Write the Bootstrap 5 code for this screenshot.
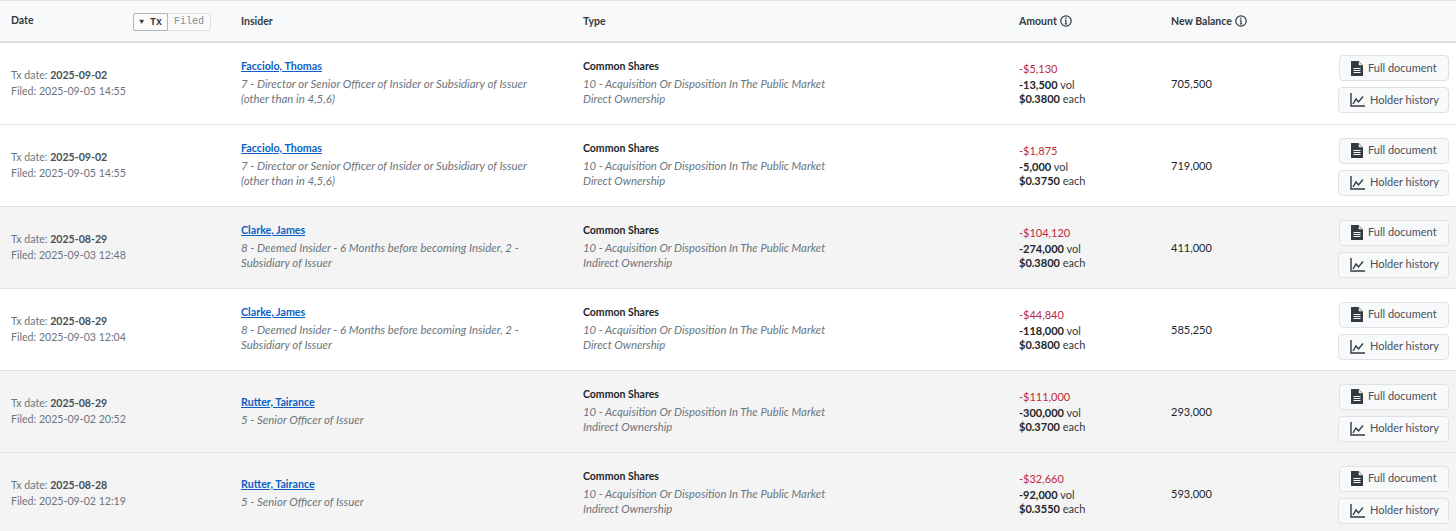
<!DOCTYPE html>
<html lang="en"><head><meta charset="utf-8">
<link href="https://cdn.jsdelivr.net/npm/bootstrap@5.3.0/dist/css/bootstrap.min.css" rel="stylesheet">
<style>
body{font-family:"Lato","Liberation Sans",sans-serif;font-size:11px;color:#343a40;background:#fff;overflow:hidden}
.tx-table{table-layout:fixed;width:1456px;margin:0;border-collapse:collapse;font-size:11px;--bs-table-bg:transparent}
.tx-table th{height:41px;background:#f8f9fa;border-top:1px solid #e3e5e8;border-bottom:2px solid #dcdfe3;font-size:10.5px;font-weight:700;color:#343a40;padding:2px 0 0 11px;vertical-align:middle}
.tx-table td{height:82px;padding:0 0 0 11px;border-bottom:1px solid #dee2e6;vertical-align:middle;line-height:15px}
.tx-table tbody tr:first-child td{height:83px}
.tx-table th.c-ins,.tx-table th.c-typ,.tx-table th.c-amt,.tx-table th.c-bal,.tx-table td.c-amt,.tx-table td.c-bal{padding-left:0}
.tx-table td.c-ins{padding:0 0 3px}
.tx-table td.c-typ{padding:0 0 2px}
.tx-table td.c-date{padding-bottom:1px}
.tx-table td.c-act{padding:2px 7px 0 0;text-align:right}
.tx-table tr.shade td{background:#f4f4f4}
.date-lines{color:#6c757d;line-height:16px;font-size:10.6px}
.date-lines b{color:#495057;font-weight:700}
.who{font-size:10.7px;font-weight:700;color:#0d5fc4;text-decoration:underline;display:block;margin-bottom:3px}
.kind{font-size:10.5px;font-weight:700;color:#212529;display:block;margin-bottom:2px}
.sub{font-style:italic;color:#6c757d}
.c-ins .sub{font-size:11.45px}
.c-typ .sub{font-size:11.3px}
.neg{color:#bd2a3c;display:block;margin-bottom:2px}
.amt-line{color:#343a40;line-height:14px;display:block}
.amt-line b{color:#212529;font-weight:700}
.info{width:12px;height:12px;vertical-align:-2px;margin-left:1px}
.seg{display:inline-flex;font-family:"Liberation Mono",monospace;font-size:10px;line-height:15px;float:right;margin-right:30px}
.seg span{border:1px solid #dee2e6;border-left:0;padding:0 6px;color:#868e96;font-weight:400;border-radius:0 2px 2px 0}
.seg span.on{border:1px solid #adb5bd;background:#fbfbfc;color:#343a40;font-weight:700;border-radius:2px 0 0 2px;padding:0 5px}
.seg i{font-style:normal;font-size:8px;vertical-align:1px}
.acts{display:inline-flex;flex-direction:column;align-items:flex-end;gap:6px;vertical-align:middle}
.acts .btn{--bs-btn-font-size:11px;--bs-btn-color:#495057;--bs-btn-bg:#f8f9fa;--bs-btn-border-color:#dee2e6;--bs-btn-hover-bg:#f8f9fa;--bs-btn-hover-color:#495057;--bs-btn-hover-border-color:#dee2e6;--bs-btn-border-radius:4px;height:26px;padding:0 8px;display:inline-flex;align-items:center;gap:5px;white-space:nowrap}
.acts .btn.w-a{width:110px;padding-left:11px}
.acts .btn.w-b{width:111px;padding-left:11px}
.acts svg{flex:none}
</style></head><body>
<table class="table tx-table">
<colgroup><col style="width:241px"><col style="width:342px"><col style="width:436px"><col style="width:152px"><col style="width:156px"><col></colgroup>
<thead><tr>
<th><span class="seg"><span class="on"><i>▼</i> Tx</span><span>Filed</span></span>Date</th>
<th class="c-ins">Insider</th><th class="c-typ">Type</th>
<th class="c-amt">Amount <svg class="info" viewBox="0 0 12 12" fill="none" stroke="#343a40" stroke-width="1.200"><circle cx="6" cy="6" r="5.200"/><path d="M6 5.200V9M4.800 9h2.400M4.900 5.200H6"/><circle cx="6" cy="3.300" r=".8" fill="#343a40" stroke="none"/></svg></th>
<th class="c-bal">New Balance <svg class="info" viewBox="0 0 12 12" fill="none" stroke="#343a40" stroke-width="1.200"><circle cx="6" cy="6" r="5.200"/><path d="M6 5.200V9M4.800 9h2.400M4.900 5.200H6"/><circle cx="6" cy="3.300" r=".8" fill="#343a40" stroke="none"/></svg></th>
<th></th>
</tr></thead>
<tbody>
<tr>
<td class="c-date"><div class="date-lines">Tx date: <b>2025-09-02</b><br>Filed: 2025-09-05 14:55</div></td>
<td class="c-ins"><a class="who" href="#">Facciolo, Thomas</a><span class="sub">7 - Director or Senior Officer of Insider or Subsidiary of Issuer<br>(other than in 4,5,6)</span></td>
<td class="c-typ"><span class="kind">Common Shares</span><span class="sub">10 - Acquisition Or Disposition In The Public Market<br>Direct Ownership</span></td>
<td class="c-amt"><span class="neg">-$5,130</span><span class="amt-line"><b>-13,500</b> vol</span><span class="amt-line"><b>$0.3800</b> each</span></td>
<td class="c-bal">705,500</td>
<td class="c-act"><div class="acts"><a class="btn w-a" href="#"><svg width="12" height="15" viewBox="0 0 12 15"><path fill="#343a40" d="M0 0h7.500L12 4.500V15H0z"/><path fill="#f8f9fa" d="M7.800 .8V4.200H11.200z"/><path stroke="#f8f9fa" d="M2.500 7.500h7M2.500 9.500h7M2.500 11.500h7"/></svg>Full document</a><a class="btn w-b" href="#"><svg width="15" height="14" viewBox="0 0 15 14" fill="none" stroke="#343a40" stroke-width="1.400"><path d="M1 0v13h14"/><path d="M3 11l3-5 2.500 3L13 3.500"/></svg>Holder history</a></div></td>
</tr>
<tr>
<td class="c-date"><div class="date-lines">Tx date: <b>2025-09-02</b><br>Filed: 2025-09-05 14:55</div></td>
<td class="c-ins"><a class="who" href="#">Facciolo, Thomas</a><span class="sub">7 - Director or Senior Officer of Insider or Subsidiary of Issuer<br>(other than in 4,5,6)</span></td>
<td class="c-typ"><span class="kind">Common Shares</span><span class="sub">10 - Acquisition Or Disposition In The Public Market<br>Direct Ownership</span></td>
<td class="c-amt"><span class="neg">-$1,875</span><span class="amt-line"><b>-5,000</b> vol</span><span class="amt-line"><b>$0.3750</b> each</span></td>
<td class="c-bal">719,000</td>
<td class="c-act"><div class="acts"><a class="btn w-a" href="#"><svg width="12" height="15" viewBox="0 0 12 15"><path fill="#343a40" d="M0 0h7.500L12 4.500V15H0z"/><path fill="#f8f9fa" d="M7.800 .8V4.200H11.200z"/><path stroke="#f8f9fa" d="M2.500 7.500h7M2.500 9.500h7M2.500 11.500h7"/></svg>Full document</a><a class="btn w-b" href="#"><svg width="15" height="14" viewBox="0 0 15 14" fill="none" stroke="#343a40" stroke-width="1.400"><path d="M1 0v13h14"/><path d="M3 11l3-5 2.500 3L13 3.500"/></svg>Holder history</a></div></td>
</tr>
<tr class="shade">
<td class="c-date"><div class="date-lines">Tx date: <b>2025-08-29</b><br>Filed: 2025-09-03 12:48</div></td>
<td class="c-ins"><a class="who" href="#">Clarke, James</a><span class="sub">8 - Deemed Insider - 6 Months before becoming Insider, 2 -<br>Subsidiary of Issuer</span></td>
<td class="c-typ"><span class="kind">Common Shares</span><span class="sub">10 - Acquisition Or Disposition In The Public Market<br>Indirect Ownership</span></td>
<td class="c-amt"><span class="neg">-$104,120</span><span class="amt-line"><b>-274,000</b> vol</span><span class="amt-line"><b>$0.3800</b> each</span></td>
<td class="c-bal">411,000</td>
<td class="c-act"><div class="acts"><a class="btn w-a" href="#"><svg width="12" height="15" viewBox="0 0 12 15"><path fill="#343a40" d="M0 0h7.500L12 4.500V15H0z"/><path fill="#f8f9fa" d="M7.800 .8V4.200H11.200z"/><path stroke="#f8f9fa" d="M2.500 7.500h7M2.500 9.500h7M2.500 11.500h7"/></svg>Full document</a><a class="btn w-b" href="#"><svg width="15" height="14" viewBox="0 0 15 14" fill="none" stroke="#343a40" stroke-width="1.400"><path d="M1 0v13h14"/><path d="M3 11l3-5 2.500 3L13 3.500"/></svg>Holder history</a></div></td>
</tr>
<tr>
<td class="c-date"><div class="date-lines">Tx date: <b>2025-08-29</b><br>Filed: 2025-09-03 12:04</div></td>
<td class="c-ins"><a class="who" href="#">Clarke, James</a><span class="sub">8 - Deemed Insider - 6 Months before becoming Insider, 2 -<br>Subsidiary of Issuer</span></td>
<td class="c-typ"><span class="kind">Common Shares</span><span class="sub">10 - Acquisition Or Disposition In The Public Market<br>Direct Ownership</span></td>
<td class="c-amt"><span class="neg">-$44,840</span><span class="amt-line"><b>-118,000</b> vol</span><span class="amt-line"><b>$0.3800</b> each</span></td>
<td class="c-bal">585,250</td>
<td class="c-act"><div class="acts"><a class="btn w-a" href="#"><svg width="12" height="15" viewBox="0 0 12 15"><path fill="#343a40" d="M0 0h7.500L12 4.500V15H0z"/><path fill="#f8f9fa" d="M7.800 .8V4.200H11.200z"/><path stroke="#f8f9fa" d="M2.500 7.500h7M2.500 9.500h7M2.500 11.500h7"/></svg>Full document</a><a class="btn w-b" href="#"><svg width="15" height="14" viewBox="0 0 15 14" fill="none" stroke="#343a40" stroke-width="1.400"><path d="M1 0v13h14"/><path d="M3 11l3-5 2.500 3L13 3.500"/></svg>Holder history</a></div></td>
</tr>
<tr class="shade">
<td class="c-date"><div class="date-lines">Tx date: <b>2025-08-29</b><br>Filed: 2025-09-02 20:52</div></td>
<td class="c-ins"><a class="who" href="#">Rutter, Tairance</a><span class="sub">5 - Senior Officer of Issuer</span></td>
<td class="c-typ"><span class="kind">Common Shares</span><span class="sub">10 - Acquisition Or Disposition In The Public Market<br>Indirect Ownership</span></td>
<td class="c-amt"><span class="neg">-$111,000</span><span class="amt-line"><b>-300,000</b> vol</span><span class="amt-line"><b>$0.3700</b> each</span></td>
<td class="c-bal">293,000</td>
<td class="c-act"><div class="acts"><a class="btn w-a" href="#"><svg width="12" height="15" viewBox="0 0 12 15"><path fill="#343a40" d="M0 0h7.500L12 4.500V15H0z"/><path fill="#f8f9fa" d="M7.800 .8V4.200H11.200z"/><path stroke="#f8f9fa" d="M2.500 7.500h7M2.500 9.500h7M2.500 11.500h7"/></svg>Full document</a><a class="btn w-b" href="#"><svg width="15" height="14" viewBox="0 0 15 14" fill="none" stroke="#343a40" stroke-width="1.400"><path d="M1 0v13h14"/><path d="M3 11l3-5 2.500 3L13 3.500"/></svg>Holder history</a></div></td>
</tr>
<tr class="shade">
<td class="c-date"><div class="date-lines">Tx date: <b>2025-08-28</b><br>Filed: 2025-09-02 12:19</div></td>
<td class="c-ins"><a class="who" href="#">Rutter, Tairance</a><span class="sub">5 - Senior Officer of Issuer</span></td>
<td class="c-typ"><span class="kind">Common Shares</span><span class="sub">10 - Acquisition Or Disposition In The Public Market<br>Indirect Ownership</span></td>
<td class="c-amt"><span class="neg">-$32,660</span><span class="amt-line"><b>-92,000</b> vol</span><span class="amt-line"><b>$0.3550</b> each</span></td>
<td class="c-bal">593,000</td>
<td class="c-act"><div class="acts"><a class="btn w-a" href="#"><svg width="12" height="15" viewBox="0 0 12 15"><path fill="#343a40" d="M0 0h7.500L12 4.500V15H0z"/><path fill="#f8f9fa" d="M7.800 .8V4.200H11.200z"/><path stroke="#f8f9fa" d="M2.500 7.500h7M2.500 9.500h7M2.500 11.500h7"/></svg>Full document</a><a class="btn w-b" href="#"><svg width="15" height="14" viewBox="0 0 15 14" fill="none" stroke="#343a40" stroke-width="1.400"><path d="M1 0v13h14"/><path d="M3 11l3-5 2.500 3L13 3.500"/></svg>Holder history</a></div></td>
</tr>
</tbody></table>
</body></html>
